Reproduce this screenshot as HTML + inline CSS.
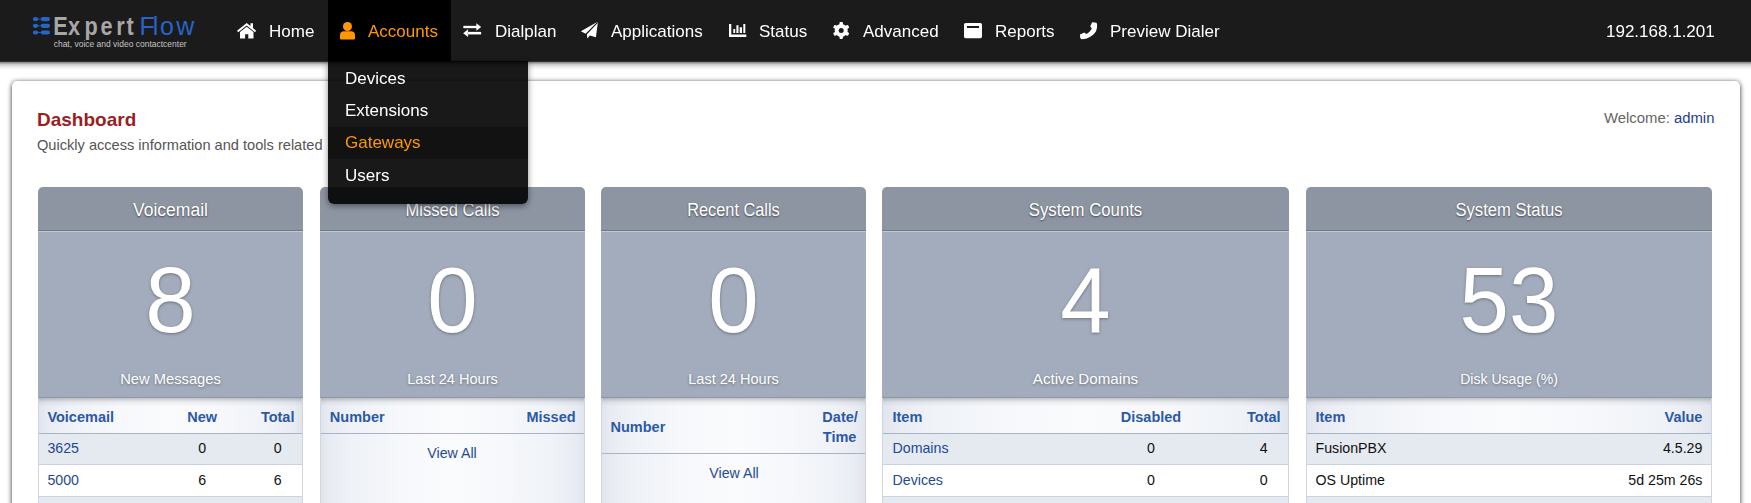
<!DOCTYPE html>
<html><head><meta charset="utf-8">
<style>
*{box-sizing:border-box;}
html,body{margin:0;padding:0;width:1751px;height:503px;overflow:hidden;background:#fff;font-family:"Liberation Sans",sans-serif;position:relative;}
.t{position:absolute;white-space:nowrap;}
#nav{position:absolute;left:0;top:0;width:1751px;height:61px;background:#1b1b1b;z-index:5;}
#nsh{position:absolute;left:0;top:61px;width:1751px;height:11px;background:linear-gradient(rgba(0,0,0,.97) 0,rgba(0,0,0,.45) 1.5px,rgba(0,0,0,.2) 3.5px,rgba(0,0,0,.07) 6px,rgba(0,0,0,0) 9px);z-index:4;}
.nt{position:absolute;top:0;height:61px;color:#fff;font-size:17px;line-height:63px;white-space:nowrap;will-change:transform;}
.ic{position:absolute;}
.act{position:absolute;top:0;height:61px;background:#000;}
#logo{position:absolute;left:0;top:0;}
#card{position:absolute;left:11.5px;top:80.5px;width:1728.5px;height:520px;background:#fff;border-radius:5px;box-shadow:0 1px 5px rgba(0,0,0,.85);}
#dd{position:absolute;left:328px;top:61px;width:200px;height:142.5px;background:rgba(0,0,0,.9);border-radius:0 0 6px 6px;box-shadow:0 2px 6px rgba(0,0,0,.45);z-index:6;overflow:hidden;}
#dd .t{will-change:transform;}
.ddi{position:absolute;left:17px;color:#fff;font-size:17px;white-space:nowrap;}
.pn{position:absolute;top:187px;height:400px;border-radius:5px 5px 0 0;overflow:hidden;}
.ph{position:absolute;left:0;right:0;top:0;height:44px;background:#8d95a3;border-bottom:1px solid #6f7786;color:#fff;text-shadow:0 1px 2px rgba(0,0,0,.55);}
.pb{position:absolute;left:0;right:0;top:44px;height:167px;background:#a3acbc;border-top:1px solid #c2c9d6;border-bottom:1px solid #8e97a8;color:#fff;text-shadow:0 1px 3px rgba(0,0,0,.35);}
.pt{position:absolute;left:0;right:0;top:211px;bottom:0;background:linear-gradient(to right,#e0e4ec 0%,#e8ebf2 3%,#eff2f7 12%,#f6f8fb 30%,#fafbfd 50%,#f6f8fb 70%,#eff2f7 88%,#e8ebf2 97%,#e0e4ec 100%);border-left:1px solid #d0d5e0;border-right:1px solid #d0d5e0;color:#111;}
.pt:before{content:"";position:absolute;left:0;right:0;top:0;height:8px;background:linear-gradient(rgba(60,65,75,.3),rgba(60,65,75,.08) 50%,rgba(60,65,75,0));z-index:2;}
.hd{color:#2b59a6;font-weight:bold;}
.row{position:absolute;left:0;right:0;height:32px;border-bottom:1px solid #c9d2e2;}
.o{background:#e5e9f0;}
.e{background:#fff;}
.lk{color:#1f4a92;}
.hb{position:absolute;left:0;right:0;border-bottom:1px solid #a9b3c6;}
</style></head><body>
<div id="nav">
  <svg id="logo" width="220" height="61" viewBox="0 0 220 61">
    <g fill="#2864c8"><ellipse cx="35.6" cy="19.1" rx="2.7" ry="2.1"/><rect x="37" y="18.700000000000003" width="5" height="0.8"/><rect x="40.7" y="17.0" width="9.3" height="4.2" rx="2.1"/><ellipse cx="35.6" cy="25.8" rx="2.7" ry="2.1"/><rect x="37" y="25.400000000000002" width="5" height="0.8"/><rect x="40.7" y="23.7" width="9.3" height="4.2" rx="2.1"/><ellipse cx="35.6" cy="32.5" rx="2.7" ry="2.1"/><rect x="37" y="32.1" width="5" height="0.8"/><rect x="40.7" y="30.4" width="9.3" height="4.2" rx="2.1"/></g>
    <g transform="scale(0.85,1)"><text x="62.71 80.12 99.41 118.12 136.71 148.94" y="34.7" font-family="Liberation Sans" font-weight="bold" font-size="25.5" fill="#a7a7a7">Expert</text></g><text x="139.4 152.8 160.0 176.3" y="34.7" font-family="Liberation Sans" font-size="25" fill="#2864c8">Flow</text>
    <text x="53.7" y="47.4" font-family="Liberation Sans" font-size="8.6" fill="#c4c4c4" textLength="133" lengthAdjust="spacingAndGlyphs">chat, voice and video contactcenter</text>
  </svg>
  <svg class="ic" style="left:237px;top:22.7px" width="20" height="16" viewBox="0 0 20 16"><path fill="#fff" d="M0 7.7 L9.7 0 L19.2 7.7 L18 9.2 L9.7 2.6 L1.2 9.2 Z M13.5 0.3 H16 V5.6 L13.5 3.6 Z M3 9 L9.7 3.8 L16.5 9 V15.5 H11.3 V11.2 H8.1 V15.5 H3 Z"/></svg>
  <div class="nt" style="left:269px">Home</div>
  <div class="act" style="left:328px;width:123px"></div>
  <svg class="ic" style="left:340px;top:21.8px" width="16" height="18" viewBox="0 0 16 18"><circle cx="7.5" cy="4.5" r="4.5" fill="#ff9800"/><path fill="#ff9800" d="M0 13.3 Q0 9.3 4 9.3 H11 Q15 9.3 15 13.3 V16.4 Q15 17.4 14 17.4 H1 Q0 17.4 0 16.4 Z"/></svg>
  <div class="nt" style="left:368px;color:#ff9800">Accounts</div>
  <svg class="ic" style="left:463px;top:23.3px" width="19" height="15" viewBox="0 0 19 15"><g fill="#fff" stroke="#fff" stroke-width="0.3" stroke-linejoin="round"><path d="M0.5 2.9 H14 V5.1 H0.5 Z M13.5 0.6 L18 4 L13.5 7.4 Z"/><path d="M4.6 9.1 H18 V11.3 H4.6 Z M4.9 6.6 L0.4 10.2 L4.9 13.8 Z"/></g></svg>
  <div class="nt" style="left:495px">Dialplan</div>
  <svg class="ic" style="left:580px;top:20.6px" width="19" height="18" viewBox="0 0 19 18"><path fill="#fff" d="M0.9 10.3 L17.2 1.1 L5.6 12.7 Z M18 0.4 L15.9 16.2 L9.9 14.4 L7.2 17.4 L7 13.3 L17.4 2.2 Z"/></svg>
  <div class="nt" style="left:611px">Applications</div>
  <svg class="ic" style="left:728.7px;top:23.9px" width="18" height="13" viewBox="0 0 18 13"><path fill="#fff" d="M0 0 H2.3 V10.5 H17.3 V12.9 H0 Z M4.3 5.1 H6.2 V9 H4.3 Z M7.4 1.2 H9.5 V9 H7.4 Z M10.7 3.3 H13 V9 H10.7 Z M14.3 0 H16.3 V9 H14.3 Z"/></svg>
  <div class="nt" style="left:759px">Status</div>
  <svg class="ic" style="left:832px;top:21px" width="18" height="18" viewBox="0 0 18 18"><g fill="#fff"><circle cx="9.2" cy="9.4" r="6.5"/><rect x="7.5" y="0.9" width="3.4" height="17" rx="0.8"/><rect x="7.5" y="0.9" width="3.4" height="17" rx="0.8" transform="rotate(60 9.2 9.4)"/><rect x="7.5" y="0.9" width="3.4" height="17" rx="0.8" transform="rotate(120 9.2 9.4)"/></g><circle cx="9.2" cy="9.4" r="2.5" fill="#1b1b1b"/></svg>
  <div class="nt" style="left:863px">Advanced</div>
  <svg class="ic" style="left:964px;top:22.8px" width="18" height="16" viewBox="0 0 18 16"><path fill="#fff" fill-rule="evenodd" d="M1.6 0 H16.4 Q18 0 18 1.6 V13.6 Q18 15.2 16.4 15.2 H1.6 Q0 15.2 0 13.6 V1.6 Q0 0 1.6 0 Z M3 2.9 V5 H15 V2.9 Z"/></svg>
  <div class="nt" style="left:995px">Reports</div>
  <svg class="ic" style="left:1080px;top:22px" width="18" height="18" viewBox="0 0 18 18"><path fill="#fff" d="M10.6 3.4 L12.1 0.2 L16.5 0.8 Q17.3 1.5 17.1 4.9 Q16.6 8 15.7 9.7 Q14 12 12.1 13.6 Q9.5 15.8 6.7 16.6 Q4 17.3 1.6 17.2 L0.2 16 L0 12.4 L4.3 10.6 L6.1 12.1 Q8.3 11 9.7 9.4 Q11 8 11.8 6.4 L10.3 4.6 Z"/></svg>
  <div class="nt" style="left:1110px">Preview Dialer</div>
  <div class="nt" style="left:1606px">192.168.1.201</div>
</div>

<div id="card"></div><div id="nsh"></div>
<div class="t" style="top:108.04px;font-size:19px;line-height:23.75px;color:#9a1f1f;font-weight:bold;left:37px;">Dashboard</div>
<div class="t" style="top:136.22px;font-size:14.6px;line-height:18.25px;color:#555;left:37px;">Quickly access information and tools related</div>
<div class="t" style="top:109.07px;font-size:14.86px;line-height:18.57px;color:#666;left:1604px;">Welcome: <span style="color:#1c3f8c">admin</span></div>
<div class="pn" style="left:38px;width:265px">
<div class="ph"><div class="t" style="top:11.51px;font-size:18px;line-height:22.5px;left:0.0px;width:265px;text-align:center;transform:scaleX(0.973);">Voicemail</div></div>
<div class="pb"><div class="t" style="top:10.05px;font-size:93px;line-height:116.25px;left:0.0px;width:265px;text-align:center;transform:scaleX(0.975);">8</div><div class="t" style="top:138.43px;font-size:15px;line-height:18.75px;left:0.0px;width:265px;text-align:center;transform:scaleX(0.981);">New Messages</div></div>
<div class="pt"><div class="hb" style="top:0;height:36px"></div><div class="row o" style="top:36px;height:31px"></div><div class="row e" style="top:67px"></div><div class="row o" style="top:99px"></div><div class="t hd" style="top:10.12px;font-size:14.5px;line-height:18.12px;left:8.4px;">Voicemail</div><div class="t hd" style="top:10.12px;font-size:14.5px;line-height:18.12px;left:133.2px;width:60px;text-align:center;">New</div><div class="t hd" style="top:10.12px;font-size:14.5px;line-height:18.12px;left:208.7px;width:60px;text-align:center;">Total</div><div class="t lk" style="top:41.5px;font-size:14.2px;line-height:17.75px;left:8.4px;">3625</div><div class="t" style="top:41.5px;font-size:14.2px;line-height:17.75px;left:133.2px;width:60px;text-align:center;">0</div><div class="t" style="top:41.5px;font-size:14.2px;line-height:17.75px;left:208.7px;width:60px;text-align:center;">0</div><div class="t lk" style="top:73.8px;font-size:14.2px;line-height:17.75px;left:8.4px;">5000</div><div class="t" style="top:73.8px;font-size:14.2px;line-height:17.75px;left:133.2px;width:60px;text-align:center;">6</div><div class="t" style="top:73.8px;font-size:14.2px;line-height:17.75px;left:208.7px;width:60px;text-align:center;">6</div></div>
</div>
<div class="pn" style="left:320px;width:265px">
<div class="ph"><div class="t" style="top:11.51px;font-size:18px;line-height:22.5px;left:0.0px;width:265px;text-align:center;transform:scaleX(0.92);">Missed Calls</div></div>
<div class="pb"><div class="t" style="top:10.05px;font-size:93px;line-height:116.25px;left:0.0px;width:265px;text-align:center;transform:scaleX(0.975);">0</div><div class="t" style="top:138.43px;font-size:15px;line-height:18.75px;left:0.0px;width:265px;text-align:center;transform:scaleX(0.97);">Last 24 Hours</div></div>
<div class="pt"><div class="hb" style="top:0;height:36px"></div><div class="t hd" style="top:10.12px;font-size:14.5px;line-height:18.12px;left:8.8px;">Number</div><div class="t hd" style="top:10.12px;font-size:14.5px;line-height:18.12px;right:calc(100% - 254.6px);text-align:right;">Missed</div><div class="t lk" style="top:46.7px;font-size:14.2px;line-height:17.75px;left:71.0px;width:120px;text-align:center;">View All</div></div>
</div>
<div class="pn" style="left:601px;width:265px">
<div class="ph"><div class="t" style="top:11.51px;font-size:18px;line-height:22.5px;left:0.0px;width:265px;text-align:center;transform:scaleX(0.906);">Recent Calls</div></div>
<div class="pb"><div class="t" style="top:10.05px;font-size:93px;line-height:116.25px;left:0.0px;width:265px;text-align:center;transform:scaleX(0.975);">0</div><div class="t" style="top:138.43px;font-size:15px;line-height:18.75px;left:0.0px;width:265px;text-align:center;transform:scaleX(0.97);">Last 24 Hours</div></div>
<div class="pt"><div class="hb" style="top:0;height:56px"></div><div class="t hd" style="top:20.12px;font-size:14.5px;line-height:18.12px;left:8.5px;">Number</div><div class="t hd" style="top:10.12px;font-size:14.5px;line-height:18.12px;left:208.1px;width:60px;text-align:center;">Date/</div><div class="t hd" style="top:30.12px;font-size:14.5px;line-height:18.12px;left:207.6px;width:60px;text-align:center;">Time</div><div class="t lk" style="top:66.8px;font-size:14.2px;line-height:17.75px;left:72.0px;width:120px;text-align:center;">View All</div></div>
</div>
<div class="pn" style="left:882px;width:407px">
<div class="ph"><div class="t" style="top:11.51px;font-size:18px;line-height:22.5px;left:0.0px;width:407px;text-align:center;transform:scaleX(0.93);">System Counts</div></div>
<div class="pb"><div class="t" style="top:10.05px;font-size:93px;line-height:116.25px;left:0.0px;width:407px;text-align:center;transform:scaleX(0.975);">4</div><div class="t" style="top:138.43px;font-size:15px;line-height:18.75px;left:0.0px;width:407px;text-align:center;transform:scaleX(1.011);">Active Domains</div></div>
<div class="pt"><div class="hb" style="top:0;height:36px"></div><div class="row o" style="top:36px;height:31px"></div><div class="row e" style="top:67px"></div><div class="row o" style="top:99px"></div><div class="t hd" style="top:10.12px;font-size:14.5px;line-height:18.12px;left:9.5px;">Item</div><div class="t hd" style="top:10.12px;font-size:14.5px;line-height:18.12px;left:218.0px;width:100px;text-align:center;">Disabled</div><div class="t hd" style="top:10.12px;font-size:14.5px;line-height:18.12px;left:350.8px;width:60px;text-align:center;">Total</div><div class="t lk" style="top:41.5px;font-size:14.2px;line-height:17.75px;left:9.5px;">Domains</div><div class="t" style="top:41.5px;font-size:14.2px;line-height:17.75px;left:238.0px;width:60px;text-align:center;">0</div><div class="t" style="top:41.5px;font-size:14.2px;line-height:17.75px;left:350.8px;width:60px;text-align:center;">4</div><div class="t lk" style="top:73.8px;font-size:14.2px;line-height:17.75px;left:9.5px;">Devices</div><div class="t" style="top:73.8px;font-size:14.2px;line-height:17.75px;left:238.0px;width:60px;text-align:center;">0</div><div class="t" style="top:73.8px;font-size:14.2px;line-height:17.75px;left:350.8px;width:60px;text-align:center;">0</div></div>
</div>
<div class="pn" style="left:1306px;width:406px">
<div class="ph"><div class="t" style="top:11.51px;font-size:18px;line-height:22.5px;left:0.0px;width:406px;text-align:center;transform:scaleX(0.923);">System Status</div></div>
<div class="pb"><div class="t" style="top:10.05px;font-size:93px;line-height:116.25px;left:0.0px;width:406px;text-align:center;transform:scaleX(0.955);">53</div><div class="t" style="top:138.43px;font-size:15px;line-height:18.75px;left:0.0px;width:406px;text-align:center;transform:scaleX(0.937);">Disk Usage (%)</div></div>
<div class="pt"><div class="hb" style="top:0;height:36px"></div><div class="row o" style="top:36px;height:31px"></div><div class="row e" style="top:67px"></div><div class="row o" style="top:99px"></div><div class="t hd" style="top:10.12px;font-size:14.5px;line-height:18.12px;left:8.5px;">Item</div><div class="t hd" style="top:10.12px;font-size:14.5px;line-height:18.12px;right:calc(100% - 395.4px);text-align:right;">Value</div><div class="t" style="top:41.5px;font-size:14.2px;line-height:17.75px;left:8.5px;">FusionPBX</div><div class="t" style="top:41.5px;font-size:14.2px;line-height:17.75px;right:calc(100% - 395.4px);text-align:right;">4.5.29</div><div class="t" style="top:73.8px;font-size:14.2px;line-height:17.75px;left:8.5px;">OS Uptime</div><div class="t" style="top:73.8px;font-size:14.2px;line-height:17.75px;right:calc(100% - 395.4px);text-align:right;">5d 25m 26s</div></div>
</div>
<div id="dd">
  <div style="position:absolute;left:0;right:0;top:65.8px;height:32px;background:rgba(0,0,0,.3)"></div>
  <div class="t" style="top:6.78px;font-size:17px;line-height:21.25px;color:#fff;left:17px;">Devices</div><div class="t" style="top:39.38px;font-size:17px;line-height:21.25px;color:#fff;left:17px;">Extensions</div><div class="t" style="top:71.48px;font-size:17px;line-height:21.25px;color:#ff9800;left:17px;">Gateways</div><div class="t" style="top:103.68px;font-size:17px;line-height:21.25px;color:#fff;left:17px;">Users</div>
</div>
</body></html>
